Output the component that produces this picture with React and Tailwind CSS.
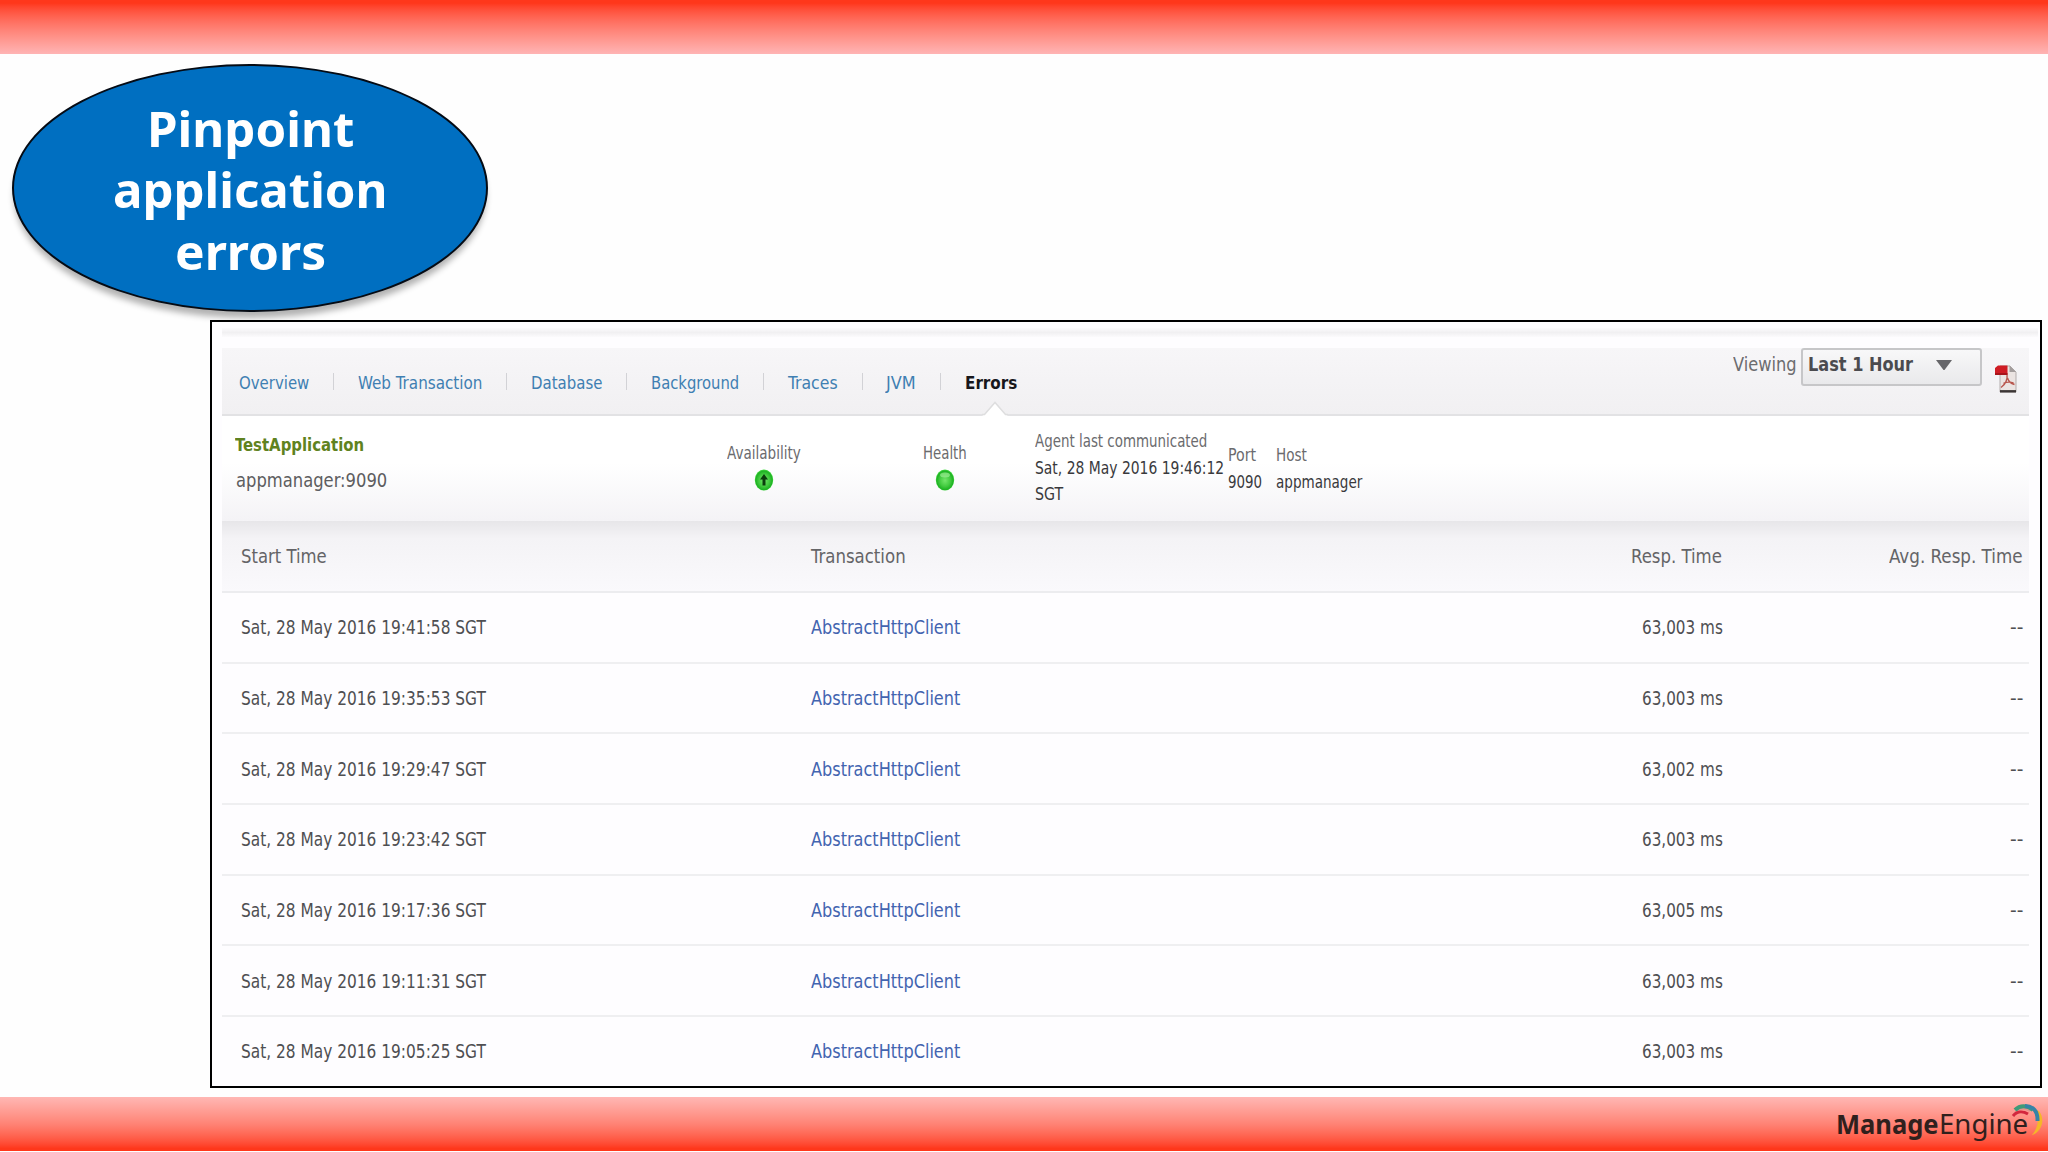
import React, { useLayoutEffect, useRef, useState } from "react";

const tabs = [
  { label: "Overview", width: 70, gap: "mr-[24px]" },
  { label: "Web Transaction", width: 124, gap: "mr-[24px]" },
  { label: "Database", width: 71, gap: "mr-[24px]" },
  { label: "Background", width: 88, gap: "mr-[24px]" },
  { label: "Traces", width: 50, gap: "mr-[23px]" },
  { label: "JVM", width: 30, gap: "mr-[24px]" },
];

const rows = [
  { time: "Sat, 28 May 2016 19:41:58 SGT", resp: "63,003 ms" },
  { time: "Sat, 28 May 2016 19:35:53 SGT", resp: "63,003 ms" },
  { time: "Sat, 28 May 2016 19:29:47 SGT", resp: "63,002 ms" },
  { time: "Sat, 28 May 2016 19:23:42 SGT", resp: "63,003 ms" },
  { time: "Sat, 28 May 2016 19:17:36 SGT", resp: "63,005 ms" },
  { time: "Sat, 28 May 2016 19:11:31 SGT", resp: "63,003 ms" },
  { time: "Sat, 28 May 2016 19:05:25 SGT", resp: "63,003 ms" },
];

// One line of text, condensed or stretched to an exact width
const Fit = ({ width, className = "", children }) => {
  const ref = useRef(null);
  const [scale, setScale] = useState(1);

  useLayoutEffect(() => {
    setScale(width / ref.current.offsetWidth);
  }, [width, children]);

  return (
    <span className={`block shrink-0 ${className}`} style={{ width }}>
      <span
        ref={ref}
        className="inline-block origin-left whitespace-nowrap align-top"
        style={{ transform: `scaleX(${scale})` }}
      >
        {children}
      </span>
    </span>
  );
};

const StatusOrb = ({ arrow }) => (
  <svg width="20" height="24" viewBox="0 0 20 24">
    <defs>
      <radialGradient id="orb" cx="50%" cy="52%" r="52%">
        <stop offset="0" stopColor="#74e66b" />
        <stop offset="0.55" stopColor="#43cb40" />
        <stop offset="0.85" stopColor="#1fb324" />
        <stop offset="1" stopColor="#4be048" />
      </radialGradient>
    </defs>
    <ellipse cx="10" cy="13" rx="9.200" ry="10.500" fill="url(#orb)" />
    {arrow ? (
      <path d="M10 7l4 5.500h-2.500v6h-3v-6H6z" fill="#0a3d0c" />
    ) : (
      <ellipse cx="10" cy="8" rx="5" ry="2.500" fill="#a8f2a0" opacity="0.6" />
    )}
  </svg>
);

const PdfIcon = () => (
  <svg width="24" height="30" viewBox="0 0 24 30">
    <path d="M6 2h10l6 6v20H6z" fill="#ebe4e2" stroke="#b3adac" />
    <path d="M15.500 1.500V8H22z" fill="#a39d9c" />
    <path d="M6 27.300h16" stroke="#3b3535" strokeWidth="2.400" />
    <path d="M1 4l3-2.500h9.500V11H1z" fill="#cf1c24" />
    <path d="M1 9h12.500v2H1z" fill="#a8141b" />
    <path
      d="M13 11c.8 4-1.500 9.500-6 12.500M13.500 14c1 3.500 3.500 5.500 7 6.500M9.500 19.500c3-1.500 6.500-1.800 10-.5"
      fill="none"
      stroke="#b8564d"
      strokeWidth="1.400"
    />
  </svg>
);

const Callout = () => (
  <div className="ml-[12px] mt-[10px] flex h-[248px] w-[476px] flex-col items-center rounded-[50%] border-2 border-[#050b14] bg-[#006fc1] pt-[32px] font-['Noto_Sans','Open_Sans',sans-serif] text-[49px] leading-[61.300px] font-bold text-white shadow-[0_8px_6px_-2px_rgba(0,0,0,0.3)]">
    <Fit width={207}>Pinpoint</Fit>
    <Fit width={275}>application</Fit>
    <Fit width={151}>errors</Fit>
  </div>
);

const TabBar = () => (
  <nav className="relative flex h-[68px] items-start border-b-2 border-[#e2e2e4] bg-linear-to-b from-[#f7f6f8] to-[#f1f0f2] pl-[17px] text-[18.500px] leading-[24px] text-[#3f7fb2]">
    <div className="flex pt-[23px]">
      {tabs.map((tab) => (
        <div key={tab.label} className="flex items-center">
          <Fit width={tab.width}>{tab.label}</Fit>
          <span className={`mb-[3px] ml-[24px] h-[17px] w-px bg-[#d2d2d6] ${tab.gap}`} />
        </div>
      ))}
      <Fit width={52} className="font-bold text-[#17171b]">Errors</Fit>
    </div>
    <svg className="absolute bottom-[-2px] left-[760px]" width="26" height="15" viewBox="0 0 26 15">
      <path d="M0 15 3 13 13 2 23 13l3 2z" fill="#fff" />
      <path d="M0 13.500h2.500L13 1.500l10.500 12H26" fill="none" stroke="#dededf" strokeWidth="1.500" />
    </svg>
    <div className="ml-auto flex">
      <Fit width={64} className="pt-[4px] text-[20px] leading-[24px] text-[#6c6c6f]">Viewing</Fit>
      <button className="ml-[4px] flex h-[38px] w-[181px] items-start rounded-[3px] border-2 border-[#c6c6c8] bg-linear-to-b from-[#f8f8f9] to-[#e9e9eb] pt-[2px] pl-[5px] text-[20px] leading-[24px] font-bold text-[#4b4b4f]">
        <Fit width={105}>Last 1 Hour</Fit>
        <svg className="mt-[7px] ml-[23px]" width="16" height="12" viewBox="0 0 16 12">
          <path d="M0 1h16L8.500 11h-1z" fill="#66666a" />
        </svg>
      </button>
      <div className="mt-[16px] mr-[11px] ml-[12px]">
        <PdfIcon />
      </div>
    </div>
  </nav>
);

const AppSummary = () => (
  <section className="flex h-[105px] items-start bg-linear-to-b from-white from-45% to-[#f4f3f6] text-[17.500px] leading-[26.500px] text-[#39393c]">
    <div className="w-[492px] pl-[13px]">
      <Fit width={129} className="pt-[15px] text-[18.500px] leading-[28px] font-bold text-[#5f8220]">TestApplication</Fit>
      <Fit width={151} className="pt-[7px] pl-px text-[20px] leading-[28px] text-[#5d5d60]">appmanager:9090</Fit>
    </div>
    <div className="flex w-[100px] flex-col items-center pt-[24px] text-[#6b6b6e]">
      <Fit width={74}>Availability</Fit>
      <StatusOrb arrow />
    </div>
    <div className="ml-[81px] flex w-[100px] flex-col items-center pt-[24px] text-[#6b6b6e]">
      <Fit width={44}>Health</Fit>
      <StatusOrb />
    </div>
    <div className="ml-[40px] pt-[12px]">
      <Fit width={172} className="text-[#6b6b6e]">Agent last communicated</Fit>
      <Fit width={189}>Sat, 28 May 2016 19:46:12</Fit>
      <Fit width={28}>SGT</Fit>
    </div>
    <div className="ml-[4px] pt-[26px]">
      <Fit width={28} className="text-[#6b6b6e]">Port</Fit>
      <Fit width={34}>9090</Fit>
    </div>
    <div className="ml-[14px] pt-[26px]">
      <Fit width={31} className="text-[#6b6b6e]">Host</Fit>
      <Fit width={86}>appmanager</Fit>
    </div>
  </section>
);

const ErrorTable = () => (
  <section className="text-[#4f4f52]">
    <div className="flex h-[72px] items-center border-b-2 border-[#ececef] bg-linear-to-b from-[#e7e6e9] via-[#f4f3f6] via-25% to-[#faf9fc] pr-[6px] pl-[19px] text-[20px] leading-[24px] text-[#646467]">
      <Fit width={86}>Start Time</Fit>
      <Fit width={95} className="ml-[484px]">Transaction</Fit>
      <Fit width={91} className="ml-auto">Resp. Time</Fit>
      <Fit width={134} className="ml-[167px]">Avg. Resp. Time</Fit>
    </div>
    {rows.map((row) => (
      <div
        key={row.time}
        className="flex h-[70.700px] items-center border-b-2 border-[#efeff1] bg-[#fefdff] pr-[6px] pl-[19px] text-[19px] leading-[24px] last:h-[66px] last:border-b-0 last:pt-[2px]"
      >
        <Fit width={245}>{row.time}</Fit>
        <Fit width={149} className="ml-[325px] text-[#4364b0]">AbstractHttpClient</Fit>
        <Fit width={81} className="ml-auto">{row.resp}</Fit>
        <Fit width={13} className="ml-[287px]">--</Fit>
      </div>
    ))}
  </section>
);

const Logo = () => (
  <div className="relative flex text-[27px] leading-[36px] text-[#30201d] font-['Noto_Sans','Open_Sans',sans-serif]">
    <Fit width={103} className="font-bold">Manage</Fit>
    <Fit width={89}>Engine</Fit>
    <svg className="absolute top-[-4px] right-[-16px]" width="36" height="36" viewBox="0 0 36 36" fill="none">
      <path d="M28 8c3 6 3 17-4 25 9-3 14-15 7-24z" fill="#f5b629" />
      <path d="M5 14C8 7 16 5 22 9" stroke="#e2938c" strokeWidth="2" />
      <path d="M7 8C12 3 19 3 25 8" stroke="#3f9a78" strokeWidth="4" />
      <path d="M5 14C9 9 15 9 20 12" stroke="#d4273d" strokeWidth="3" />
      <path d="M17 4c8 0 13 5 12.500 15" stroke="#3683a6" strokeWidth="4" />
    </svg>
  </div>
);

const App = () => (
  <div className="flex h-[1152px] w-[2048px] flex-col overflow-hidden bg-[#fefefe] font-['DejaVu_Sans_Condensed','DejaVu_Sans',sans-serif]">
    <header className="h-[54px] shrink-0 bg-linear-to-b from-[#ff371b] from-6% via-[#ff7668] via-45% to-[#ffb4b4]" />
    <Callout />
    <main className="relative mt-[8px] ml-[210px] h-[768px] w-[1832px] shrink-0 border-2 border-black bg-[#fefdff] pr-[11px] pl-[10px]">
      <div className="mt-[6px] mr-[-9px] h-[9px] bg-linear-to-b from-[#fcfbfd] via-[#f1f0f2] to-[#fcfbfd]" />
      <div className="h-[11px]" />
      <TabBar />
      <AppSummary />
      <ErrorTable />
    </main>
    <footer className="mt-[9px] flex h-[54px] shrink-0 items-start justify-end bg-linear-to-b from-[#ffb7b4] via-[#ff8375] via-50% to-[#ff371b] to-95% pt-[9px] pr-[20px]">
      <Logo />
    </footer>
  </div>
);

export default App;
